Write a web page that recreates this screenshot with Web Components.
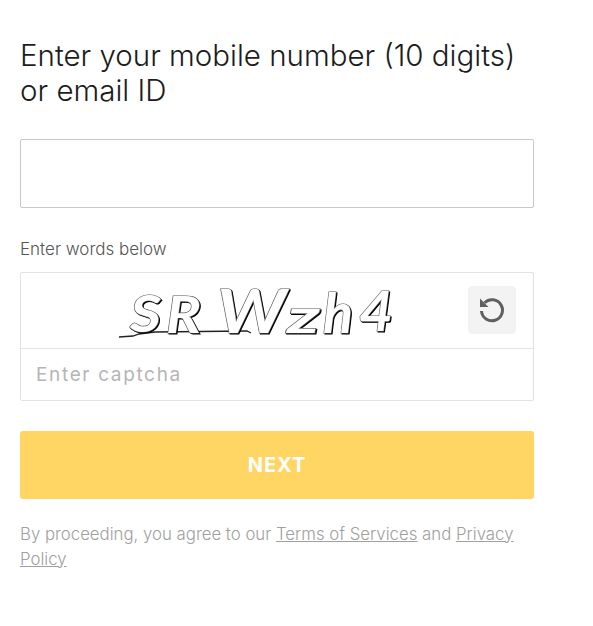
<!DOCTYPE html>
<html lang="en">
<head>
<meta charset="utf-8">
<title>Sign in</title>
<style>
  html, body { margin: 0; background: #fff; }
  body { font-family: "Inter", "Liberation Sans", sans-serif; }
  login-form a { color: #a0a0a0; text-decoration: underline; }
</style>
</head>
<body>
<login-form>
  <span slot="title">Enter your mobile number (10 digits) or email ID</span>
  <span slot="legal">By proceeding, you agree to our <a href="#">Terms of Services</a> and <a href="#">Privacy</a> <a href="#">Policy</a></span>
</login-form>

<script>
// captcha image + refresh button + input
const captchaTemplate = document.createElement("template");
captchaTemplate.innerHTML = /*html*/`
  <style>
  :host { display: block; }
  label { display: block; font-size: 17px; line-height: 20px; color: #555; margin: 1px 0 13px; font-weight: 350; }
  .box { border: 1px solid #e2e2e2; border-radius: 2px; }
  .top { display: flex; align-items: center; height: 75px; border-bottom: 1px solid #e2e2e2; }
  svg.word { display: block; width: 280px; height: 75px; margin-left: 98px; }
  svg.word text { font-family: "Lato", sans-serif; font-style: italic; font-weight: 700; font-size: 52px; fill: #fff; stroke: #555; stroke-width: 1.2px; paint-order: stroke; filter: drop-shadow(1.8px 1.4px 0.3px #000); }
  button { width: 48px; height: 48px; margin: 0 17px 2px auto; padding: 0; border: 0; border-radius: 4px; background: #f3f3f3; display: flex; align-items: center; justify-content: center; }
  input { display: block; box-sizing: border-box; width: 100%; height: 51px; border: 0; outline: 0; padding: 0 15px; background: transparent; font: 400 19px "Inter", sans-serif; letter-spacing: 1.65px; }
  input::placeholder { color: #b5b5b5; opacity: 1; }
  </style>
  <label>Enter words below</label>
  <div class="box">
    <div class="top">
      <svg class="word" viewBox="0 0 280 75" role="img" aria-label="captcha">
        <path d="M0 64 L14 63 L20 61 L36 59 L128 58 L132 60" fill="none" stroke="#222" stroke-width="1.3"/>
        <text x="11" y="59" textLength="31" lengthAdjust="spacingAndGlyphs">S</text>
        <text x="47" y="60" textLength="35" lengthAdjust="spacingAndGlyphs">R</text>
        <text x="98" y="60" textLength="69" lengthAdjust="spacingAndGlyphs" style="font-size:62px">W</text>
        <text x="168" y="60" textLength="33" lengthAdjust="spacingAndGlyphs" style="font-size:46px">z</text>
        <text x="204" y="60" textLength="30" lengthAdjust="spacingAndGlyphs" style="font-size:56px">h</text>
        <text x="240" y="58" textLength="34" lengthAdjust="spacingAndGlyphs" style="font-size:56px">4</text>
      </svg>
      <button type="button" aria-label="Refresh captcha">
        <svg width="28" height="28" viewBox="0 0 28 28" fill="none">
          <path d="M6.6 6.8 A10.5 10.5 0 1 1 3.5 15" stroke="#606060" stroke-width="3"/>
          <path d="M2 2.4 L2 11 L10.5 11 Z" fill="#606060"/>
        </svg>
      </button>
    </div>
    <input type="text" placeholder="Enter captcha">
  </div>
`;

class CaptchaField extends HTMLElement {
    constructor() {
        super();
        this.attachShadow({ mode: "open" });
    }
    connectedCallback() {
        this.shadowRoot.appendChild(captchaTemplate.content.cloneNode(true));
    }
}
customElements.define("captcha-field", CaptchaField);

// the whole form
const formTemplate = document.createElement("template");
formTemplate.innerHTML = /*html*/`
  <style>
  :host { display: block; box-sizing: border-box; width: 514px; margin-left: 20px; padding-top: 38px; font-family: "Inter", "Liberation Sans", sans-serif; }
  h1 { margin: 0 0 31px; font-size: 29.5px; line-height: 35px; font-weight: 350; color: #1c1c1c; }
  .phone { display: block; box-sizing: border-box; width: 100%; height: 69px; border: 1px solid #c8c8c8; border-radius: 2px; outline: 0; margin-bottom: 31px; }
  .next { display: block; width: 100%; height: 68px; margin: 30px 0 23px; border: 0; border-radius: 3px; background: #ffd564; color: #fff; font: 700 20px "Inter", sans-serif; letter-spacing: 1px; }
  .legal { font-size: 16.8px; line-height: 25px; color: #a0a0a0; font-weight: 350; }
  </style>
  <h1><slot name="title"></slot></h1>
  <input class="phone" type="text">
  <captcha-field></captcha-field>
  <button class="next" type="button">NEXT</button>
  <div class="legal"><slot name="legal"></slot></div>
`;

class LoginForm extends HTMLElement {
    constructor() {
        super();
        this.attachShadow({ mode: "open" });
    }
    connectedCallback() {
        this.shadowRoot.appendChild(formTemplate.content.cloneNode(true));
    }
}
customElements.define("login-form", LoginForm);
</script>
</body>
</html>
